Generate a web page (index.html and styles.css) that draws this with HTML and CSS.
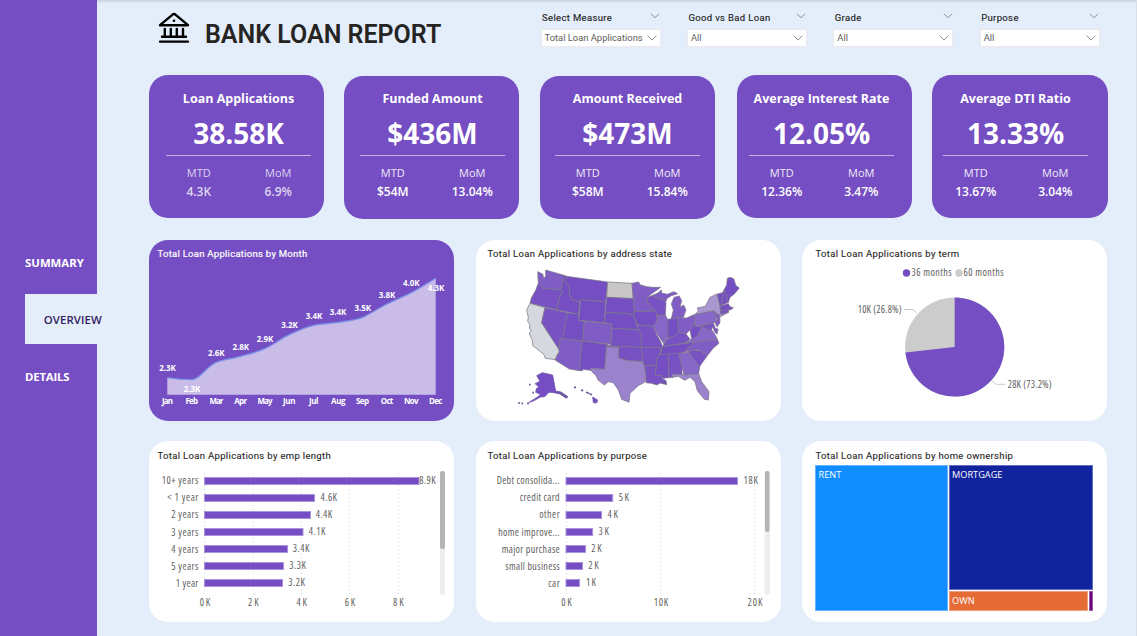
FILE: index.html
```html
<!DOCTYPE html>
<html lang="en">
<head>
<meta charset="utf-8">
<title>Bank Loan Report</title>
<link rel="stylesheet" href="styles.css">
</head>
<body>
<div class="app">
  <nav class="sidebar">
    <a class="nav-item">SUMMARY</a>
    <a class="nav-item active">OVERVIEW</a>
    <a class="nav-item">DETAILS</a>
  </nav>
  <main class="main">
    <header class="header">
      <svg class="logo" viewBox="0 0 32 32" fill="none" stroke="#000" stroke-width="2.4" stroke-linecap="round" stroke-linejoin="round">
        <path d="M2 13.2 14.6 2.6Q16 1.6 17.4 2.6L30 13.2Z"/>
        <circle cx="16" cy="8.8" r="1.3" fill="#000" stroke="none"/>
        <path d="M6.8 17v7M12.8 17v7M18.8 17v7M25 17v7M4 24.8h24M2 29.6h28"/>
      </svg>
      <h1 class="title">BANK LOAN REPORT</h1>
      <div class="slicers">
        <div class="slicer"><div class="slicer-head"><span>Select Measure</span><svg class="chev" viewBox="0 0 10 6"><path d="M1 .8 5 4.8 9 .8"/></svg></div><div class="select"><span>Total Loan Applications</span><svg class="chev" viewBox="0 0 10 6"><path d="M.6 .6 5 5 9.4 .6"/></svg></div></div>
        <div class="slicer"><div class="slicer-head"><span>Good vs Bad Loan</span><svg class="chev" viewBox="0 0 10 6"><path d="M1 .8 5 4.8 9 .8"/></svg></div><div class="select"><span>All</span><svg class="chev" viewBox="0 0 10 6"><path d="M.6 .6 5 5 9.4 .6"/></svg></div></div>
        <div class="slicer"><div class="slicer-head"><span>Grade</span><svg class="chev" viewBox="0 0 10 6"><path d="M1 .8 5 4.8 9 .8"/></svg></div><div class="select"><span>All</span><svg class="chev" viewBox="0 0 10 6"><path d="M.6 .6 5 5 9.4 .6"/></svg></div></div>
        <div class="slicer"><div class="slicer-head"><span>Purpose</span><svg class="chev" viewBox="0 0 10 6"><path d="M1 .8 5 4.8 9 .8"/></svg></div><div class="select"><span>All</span><svg class="chev" viewBox="0 0 10 6"><path d="M.6 .6 5 5 9.4 .6"/></svg></div></div>
      </div>
    </header>

    <section class="kpis">
      <article class="kpi k1 dim"><div class="kpi-in"><h2>Loan Applications</h2><strong>38.58K</strong><dl><div><dt>MTD</dt><dd>4.3K</dd></div><div><dt>MoM</dt><dd>6.9%</dd></div></dl></div></article>
      <article class="kpi k2"><div class="kpi-in"><h2>Funded Amount</h2><strong>$436M</strong><dl><div><dt>MTD</dt><dd>$54M</dd></div><div><dt>MoM</dt><dd>13.04%</dd></div></dl></div></article>
      <article class="kpi k3"><div class="kpi-in"><h2>Amount Received</h2><strong>$473M</strong><dl><div><dt>MTD</dt><dd>$58M</dd></div><div><dt>MoM</dt><dd>15.84%</dd></div></dl></div></article>
      <article class="kpi k4"><div class="kpi-in"><h2>Average Interest Rate</h2><strong>12.05%</strong><dl><div><dt>MTD</dt><dd>12.36%</dd></div><div><dt>MoM</dt><dd>3.47%</dd></div></dl></div></article>
      <article class="kpi k5"><div class="kpi-in"><h2>Average DTI Ratio</h2><strong>13.33%</strong><dl><div><dt>MTD</dt><dd>13.67%</dd></div><div><dt>MoM</dt><dd>3.04%</dd></div></dl></div></article>
    </section>

    <section class="panels">
      <article class="panel purple">
        <h3>Total Loan Applications by Month</h3>
        <svg viewBox="149 265 305 156">
          <path fill="#c9bce8" d="M167.3 377.7C175 379 184 379.7 191.7 379.7C200 379.7 206 366.5 216.3 362.3C224 359.2 233 358.6 240.7 356.3C249 354 257 352.3 265 348.7C273 345 281 338.6 289.3 334.7C297 331 306 327 314 325.3C322 323.6 330 323.6 338.3 322.3C346.5 321 354.5 320.6 362.7 317.3C371 313.6 379 307.8 387 304C395 300 403.5 296.8 411.3 292.7C419.5 288.3 427.5 283.3 435.7 278.3V394.7H167.3Z"/>
          <path fill="none" stroke="#7a8fe6" stroke-width="1.3" d="M167.3 377.7C175 379 184 379.7 191.7 379.7C200 379.7 206 366.5 216.3 362.3C224 359.2 233 358.6 240.7 356.3C249 354 257 352.3 265 348.7C273 345 281 338.6 289.3 334.7C297 331 306 327 314 325.3C322 323.6 330 323.6 338.3 322.3C346.5 321 354.5 320.6 362.7 317.3C371 313.6 379 307.8 387 304C395 300 403.5 296.8 411.3 292.7C419.5 288.3 427.5 283.3 435.7 278.3"/>
          <g class="pt">
            <text x="167.5" y="371" textLength="16.5">2.3K</text><text x="192" y="392" textLength="16.5">2.3K</text><text x="216.2" y="356" textLength="16.5">2.6K</text><text x="240.7" y="350" textLength="16.5">2.8K</text><text x="265" y="342" textLength="16.5">2.9K</text><text x="289.5" y="328" textLength="16.5">3.2K</text><text x="314" y="319" textLength="16.5">3.4K</text><text x="338" y="315" textLength="16.5">3.4K</text><text x="362.7" y="311" textLength="16.5">3.5K</text><text x="387" y="298" textLength="16.5">3.8K</text><text x="411.3" y="286" textLength="16.5">4.0K</text><text x="436" y="291" textLength="16.5">4.3K</text>
            <text x="167.5" y="404" textLength="11">Jan</text><text x="191.7" y="404" textLength="12.5">Feb</text><text x="216.5" y="404" textLength="14">Mar</text><text x="240.7" y="404" textLength="13">Apr</text><text x="265" y="404" textLength="15">May</text><text x="289.3" y="404" textLength="12.5">Jun</text><text x="313.7" y="404" textLength="9.5">Jul</text><text x="338.3" y="404" textLength="14.5">Aug</text><text x="362.5" y="404" textLength="13">Sep</text><text x="387" y="404" textLength="12.5">Oct</text><text x="411.3" y="404" textLength="14.5">Nov</text><text x="435.7" y="404" textLength="13.5">Dec</text>
          </g>
        </svg>
      </article>

      <article class="panel">
        <h3>Total Loan Applications by address state</h3>
        <svg viewBox="476 265 305 156">
          <g class="states" transform="translate(510 260) scale(.33333)">
            <path class="s2" d="M83 35 98 42 101 54 107 50 107 30 162 46 154 90 128 88 98 84 85 70Z"/>
            <path class="s1" d="M85 70 98 84 128 88 154 90 158 96 149 112 141 150 60 130 64 114 77 91Z"/>
            <path class="ca" d="M60 130 105 143 95 188 147 268 148 276 142 285 137 299 106 295 102 284 78 264 69 258 66 238 58 222 64 210 58 205 60 194 53 184 55 172 50 150Z"/>
            <path class="s1" d="M105 143 173 158 158 235 150 238 147 268 95 188Z"/>
            <path class="s0" d="M162 46 170 49 167 65 180 87 177 98 186 120 210 125 206 163 141 150 149 112 158 96 154 90Z"/>
            <path class="s0" d="M170 49 293 66 287 125 212 119 210 125 186 120 177 98 180 87 167 65Z"/>
            <path class="s0" d="M212 119 287 125 283 188 206 181Z"/>
            <path class="s0" d="M173 158 206 163 206 181 223 184 217 243 158 235Z"/>
            <path class="s2" d="M223 184 306 191 302 253 217 243Z"/>
            <path class="s2" d="M158 235 217 243 208 332 178 327 135 300 142 285 148 276 147 268 150 238Z"/>
            <path class="s0" d="M217 243 290 253 284 328 242 325 242 331 218 328 217 332 208 332Z"/>
            <path class="nd" d="M293 66 366 70 370 116 290 112Z"/>
            <path class="s0" d="M290 112 370 116 373 155 371 166 350 160 286 158Z"/>
            <path class="s0" d="M286 158 350 160 371 166 385 209 306 205 306 191 283 188Z"/>
            <path class="s1" d="M306 205 385 209 394 222 395 262 302 258Z"/>
            <path class="s1" d="M290 253 302 258 395 262 399 306 380 303 352 302 325 293 326 262 290 260Z"/>
            <path class="s4" d="M290 260 326 262 325 293 352 302 380 303 402 310 408 345 405 366 385 377 360 400 357 427 335 418 325 390 310 368 295 365 283 375 264 360 258 347 242 331 242 325 284 328Z"/>
            <path class="s2" d="M366 70 386 66 390 74 410 80 428 82 452 82 424 102 412 112 412 125 436 153 373 155 370 116Z"/>
            <path class="s0" d="M373 155 436 153 442 171 440 184 432 199 382 195 371 166Z"/>
            <path class="s1" d="M382 195 430 199 440 224 452 245 458 260 453 275 448 262 394 262 394 222 385 209Z"/>
            <path class="s1" d="M395 262 448 262 453 275 440 300 439 317 403 317 399 306Z"/>
            <path class="s1" d="M403 317 439 317 436 345 455 346 458 356 468 362 470 374 450 369 441 375 424 370 408 368 408 345Z"/>
            <path class="s1" d="M412 112 428 106 436 112 460 118 468 130 466 165 442 167 436 153 412 125Z"/>
            <path class="s3" d="M442 167 466 165 474 180 475 230 462 252 440 220 430 199 440 184Z"/>
            <path class="s0" d="M474 178 503 173 506 216 490 230 474 235Z"/>
            <path class="s2" d="M428 106 444 99 454 90 455 99 472 103 492 95 503 101 484 107 470 116 467 128 460 118 436 112Z"/>
            <path class="s2" d="M484 176 490 150 484 132 492 112 508 108 515 122 510 142 521 135 528 150 520 172 503 173Z"/>
            <path class="s2" d="M503 173 530 174 552 164 554 190 540 210 528 222 506 216Z"/>
            <path class="s1" d="M462 252 474 235 490 230 506 216 528 222 540 237 525 249 458 260Z"/>
            <path class="s0" d="M458 260 552 246 525 275 507 281 450 284Z"/>
            <path class="s0" d="M448 284 475 282 476 353 458 355 455 346 436 345 439 317 440 300Z"/>
            <path class="s1" d="M475 282 507 279 516 320 516 343 486 343 488 352 476 353Z"/>
            <path class="s3" d="M507 279 538 277 570 314 566 341 522 345 516 320Z"/>
            <path class="s4" d="M488 343 516 343 522 345 566 341 575 365 597 395 595 420 583 418 562 392 555 365 540 352 524 361 505 349 488 352Z"/>
            <path class="s1" d="M532 275 550 270 560 272 568 270 592 287 568 320 538 277Z"/>
            <path class="s2" d="M525 275 552 246 622 238 627 250 610 264 592 287 568 270 550 270Z"/>
            <path class="s3" d="M525 249 545 237 562 228 575 203 592 195 612 218 622 238 552 246Z"/>
            <path class="s0" d="M540 210 554 190 556 200 572 198 590 192 575 203 562 228 545 237Z"/>
            <path class="s1" d="M572 198 610 188 616 205 624 207 621 223 613 213 608 200 603 213Z"/>
            <path class="s3" d="M554 163 612 152 622 165 615 187 556 200 552 170Z"/>
            <path class="s5" d="M556 163 565 153 562 144 586 139 600 112 622 102 630 140 632 160 655 157 632 170 612 152Z"/>
            <path class="s2" d="M612 156 629 166 630 188 621 201 615 187 622 175Z"/>
            <path class="s0" d="M622 102 638 98 636 135 630 138Z"/>
            <path class="s0" d="M638 98 643 88 655 127 636 135Z"/>
            <path class="s0" d="M630 138 655 131 660 140 670 143 663 149 632 152Z"/>
            <path class="s1" d="M632 152 655 148 656 157 632 163Z"/>
            <path class="s0" d="M643 88 650 75 652 55 660 52 671 56 678 77 688 84 673 102 660 112 655 127Z"/>
            <path class="s0 soft" d="M80 347 97 338 128 345 137 393 153 396 174 410 169 415 150 402 132 398 117 397 104 410 92 411 68 424 57 427 84 410 91 403 77 397 79 386 86 380 75 371 90 364Z"/>
            <path class="dots" d="M24 429h6M34 430h5M51 430h6M192 382h6M213 391h7M228 397l9 3M238 401l8 3M67 398h5M57 374h5M460 367h9M146 396l17 12 9 4"/>
            <path class="s0 soft" d="M248 411 263 420 260 429 250 428Z"/>
          </g>
        </svg>
      </article>

      <article class="panel">
        <h3>Total Loan Applications by term</h3>
        <svg viewBox="802 265 305 156">
          <circle cx="954.7" cy="347" r="49.6" fill="#ccc"/>
          <path fill="#744ec2" d="M954.7 347V297.4A49.6 49.6 0 1 1 905.4 352.6Z"/>
          <circle cx="906.5" cy="273" r="3.7" fill="#744ec2"/><circle cx="959" cy="273" r="3.7" fill="#ccc"/>
          <path fill="none" stroke="#c8c8c8" d="M904 309.5H913L917 313M992 380.5 996 384.3H1005"/>
          <g class="lbl">
            <text x="911.5" y="276" textLength="40">36 months</text><text x="963.5" y="276" textLength="40">60 months</text>
            <text x="857.7" y="313" textLength="44">10K (26.8%)</text><text x="1007.7" y="388" textLength="44">28K (73.2%)</text>
          </g>
        </svg>
      </article>

      <article class="panel">
        <h3>Total Loan Applications by emp length</h3>
        <svg viewBox="149 465 305 157">
          <path class="grid" d="M204.5 473V596M253.5 473V596M301.5 473V596M349.5 473V596M398.5 473V596"/>
          <g class="bar"><rect x="204.5" y="477.5" width="214.5" height="7"/><rect x="204.5" y="494.5" width="110" height="7"/><rect x="204.5" y="511.5" width="106" height="7"/><rect x="204.5" y="528.5" width="98.5" height="7"/><rect x="204.5" y="545.5" width="83" height="7"/><rect x="204.5" y="562.5" width="79" height="7"/><rect x="204.5" y="579.5" width="78" height="7"/></g>
          <g class="lbl end"><text x="198.3" y="484" textLength="36.5">10+ years</text><text x="198.3" y="501" textLength="31">&lt; 1 year</text><text x="198.3" y="518" textLength="27">2 years</text><text x="198.3" y="536" textLength="27">3 years</text><text x="198.3" y="553" textLength="27">4 years</text><text x="198.3" y="570" textLength="27">5 years</text><text x="198.3" y="587" textLength="22.5">1 year</text></g>
          <g class="lbl"><text x="419.2" y="484" textLength="16.5">8.9K</text><text x="320.5" y="501" textLength="16.5">4.6K</text><text x="315.7" y="518" textLength="16.5">4.4K</text><text x="308.8" y="535" textLength="16.5">4.1K</text><text x="292.8" y="552" textLength="16.5">3.4K</text><text x="289.3" y="569" textLength="16.5">3.3K</text><text x="288.3" y="586" textLength="16.5">3.2K</text></g>
          <g class="lbl mid"><text x="205" y="606" textLength="10.5">0K</text><text x="253.3" y="606" textLength="10.5">2K</text><text x="301.7" y="606" textLength="10.5">4K</text><text x="350" y="606" textLength="10.5">6K</text><text x="398.3" y="606" textLength="10.5">8K</text></g>
          <rect x="440" y="471" width="5" height="124" rx="2.5" fill="#eee"/><rect x="440" y="471" width="5" height="78" rx="2" fill="#b5b5b5"/>
        </svg>
      </article>

      <article class="panel">
        <h3>Total Loan Applications by purpose</h3>
        <svg viewBox="476 465 305 157">
          <path class="grid" d="M566.5 473V596M660.5 473V596M754.5 473V596"/>
          <g class="bar"><rect x="566" y="477.5" width="171.5" height="7"/><rect x="566" y="494.5" width="46.7" height="7"/><rect x="566" y="511.5" width="35.6" height="7"/><rect x="566" y="528.5" width="26.6" height="7"/><rect x="566" y="545.5" width="19.6" height="7"/><rect x="566" y="562.5" width="16.5" height="7"/><rect x="566" y="579.5" width="13.5" height="7"/></g>
          <g class="lbl end"><text x="559.7" y="484" textLength="63">Debt consolida...</text><text x="559.7" y="501" textLength="40">credit card</text><text x="559.7" y="518" textLength="20.5">other</text><text x="559.7" y="536" textLength="61.5">home improve...</text><text x="559.7" y="553" textLength="58">major purchase</text><text x="559.7" y="570" textLength="54.5">small business</text><text x="559.7" y="587" textLength="11.5">car</text></g>
          <g class="lbl"><text x="743.5" y="484" textLength="14.5">18K</text><text x="618.7" y="501" textLength="10.3">5K</text><text x="607.5" y="518" textLength="10.3">4K</text><text x="598.5" y="535" textLength="10.3">3K</text><text x="591.3" y="552" textLength="10.3">2K</text><text x="588.3" y="569" textLength="10.3">2K</text><text x="586" y="586" textLength="10">1K</text></g>
          <g class="lbl mid"><text x="566.5" y="606" textLength="10.5">0K</text><text x="661" y="606" textLength="14.5">10K</text><text x="755" y="606" textLength="15">20K</text></g>
          <rect x="764.5" y="471" width="5.5" height="124" rx="2.5" fill="#eee"/><rect x="765" y="471" width="4.5" height="61" rx="2" fill="#b5b5b5"/>
        </svg>
      </article>

      <article class="panel">
        <h3>Total Loan Applications by home ownership</h3>
        <div class="treemap">
          <div class="cell rent">RENT</div>
          <div class="cell mortgage">MORTGAGE</div>
          <div class="cell own">OWN</div>
          <div class="cell other"></div>
        </div>
      </article>
    </section>
  </main>
</div>
</body>
</html>
```
FILE: styles.css
```css
* { box-sizing: border-box; }
body { margin: 0; font-family: "Open Sans", "Noto Sans", sans-serif; }
.app { display: flex; width: 1137px; height: 636px; background: #e4eefb; overflow: hidden; border-right: 1px solid #d9dfe8; box-shadow: inset 0 3px 2px -1px #ccd6e2; }

.sidebar { width: 97px; flex: none; background: #744ec2; padding: 231px 0 0 25px; display: flex; flex-direction: column; }
.nav-item { height: 63px; line-height: 64px; font-size: 11.4px; font-weight: 700; color: #fff; white-space: nowrap; }
.nav-item.active { height: 50px; line-height: 52px; padding-left: 18.7px; background: #e4eefb; color: #33215f; font-weight: 600; letter-spacing: .1px; }
.nav-item:last-child { height: 66px; line-height: 66px; letter-spacing: -.2px; }

.main { flex: none; width: 1039px; padding-left: 52px; }
.header { height: 75px; display: flex; align-items: flex-start; }
.logo { width: 32px; height: 32px; margin: 12px 0 0 9px; flex: none; }
.title { margin: 19px 0 0 15px; width: 336px; flex: none; font: 600 25px/32px Roboto, sans-serif; color: #252423; white-space: nowrap; }
.slicers { display: grid; grid-template-columns: repeat(4, 120px); column-gap: 26.4px; margin-left: -.5px; }
.slicer-head { height: 28.5px; padding: 6px .5px 0 1.5px; display: flex; justify-content: space-between; align-items: flex-start; font: 400 9.5px/24px Roboto, sans-serif; letter-spacing: .35px; color: #252423; -webkit-text-stroke: .15px #252423; }
.slicer-head .chev { margin-top: 7px; }
.select { height: 18.5px; background: #fff; border: 1px solid #ece9ea; padding: 0 3px; display: flex; align-items: center; justify-content: space-between; font: 400 9.4px/18px Roboto, sans-serif; color: #605e5c; white-space: nowrap; }
.chev { width: 10px; height: 6px; flex: none; fill: none; stroke: #6c7681; stroke-width: .8; }

.kpis { display: grid; grid-template-columns: 195px 196px 197px 195px 176px; height: 165px; color: #fff; }
.kpi { width: 175px; height: 143px; background: #744ec2; border-radius: 19px; }
.k2, .k3 { margin-top: 1px; }
.k2 .kpi-in, .k3 .kpi-in { padding-top: 13px; }
.k5 { width: 176px; }
.kpi-in { width: 145px; margin-left: 17px; padding-top: 14px; }
.k2 .kpi-in { margin-left: 16px; }
.k3 .kpi-in { margin-left: 15px; }
.k4 .kpi-in { margin-left: 12px; }
.k5 .kpi-in { margin-left: 11px; }
.kpi h2 { margin: 0 -10px; font-size: 12.5px; line-height: 20px; text-align: center; white-space: nowrap; }
.kpi strong { display: block; height: 47px; line-height: 48px; font-size: 28px; text-align: center; border-bottom: 1px solid #c4b4e4; }
.kpi dl { margin: 8px -7px 0; display: grid; grid-template-columns: 1fr 1fr; text-align: center; }
.kpi dt { font-size: 11px; line-height: 18px; color: #f0ebf9; }
.kpi dd { margin: 0; font-size: 12px; line-height: 20px; font-weight: 600; }
.kpi.dim dt, .kpi.dim dd { color: #ddd5f0; }

.panels { display: grid; grid-template-columns: 305px 305px 305px; column-gap: 21.5px; grid-template-rows: 181px 181px; row-gap: 20px; }
.panel { background: #fff; border-radius: 19px; overflow: hidden; display: flex; flex-direction: column; }
.panel h3 { margin: 0; height: 25px; padding-left: 8.5px; font: 400 9.5px/28px Roboto, sans-serif; letter-spacing: .33px; color: #252423; white-space: nowrap; -webkit-text-stroke: .1px; }
.panel:nth-child(n+2) h3 { padding-left: 12px; }
.panel:nth-child(3n) h3 { padding-left: 13.5px; }
.panel:nth-child(4) h3 { padding-left: 8.5px; }
.panel:nth-child(n+4) h3 { height: 24px; line-height: 29px; }
.panel > svg { display: block; width: 305px; flex: none; }
.purple { background: #744ec2; }
.panel.purple h3 { color: #fff; letter-spacing: .27px; -webkit-text-stroke: .2px; }

svg text { font-family: "Open Sans", "Noto Sans", sans-serif; }
.pt text { font-size: 8px; font-weight: 700; fill: #fff; text-anchor: middle; }
.lbl text { font-size: 10px; fill: #605e5c; font-stretch: 87%; }
.end text { text-anchor: end; }
.mid text { text-anchor: middle; }
.bar rect { fill: #744ec2; stroke: #aa93dc; stroke-width: 1; }
.grid { fill: none; stroke: #d4d4d4; stroke-dasharray: 1 3; }

.states path { stroke: #7b7488; stroke-width: 2.2; stroke-linejoin: round; }
.s0 { fill: #744ec2; } .s1 { fill: #7852c3; } .s2 { fill: #805dc5; } .s3 { fill: #8768c8; } .s4 { fill: #9a82cc; } .s5 { fill: #a998cf; }
.ca { fill: #d5d9df; } .nd { fill: #c8c6c6; }
.states .soft { stroke: #6f54a8; }
.states .dots { fill: none; stroke: #6c5c96; stroke-width: 5; }

.treemap { margin-left: 13px; width: 279px; height: 147px; display: grid; grid-template-columns: 132.5px 139.5px 4px; grid-template-rows: 125px 20px; gap: 1px; }
.cell { font-size: 9.2px; line-height: 17px; padding-left: 2.5px; color: #fff; border: 1px solid rgba(255,255,255,.35); }
.rent { grid-row: 1 / 3; background: #118dff; }
.mortgage { grid-column: 2 / 4; background: #12239e; }
.own { background: #e66c37; }
.other { background: #6b007b; padding: 0; }
```
